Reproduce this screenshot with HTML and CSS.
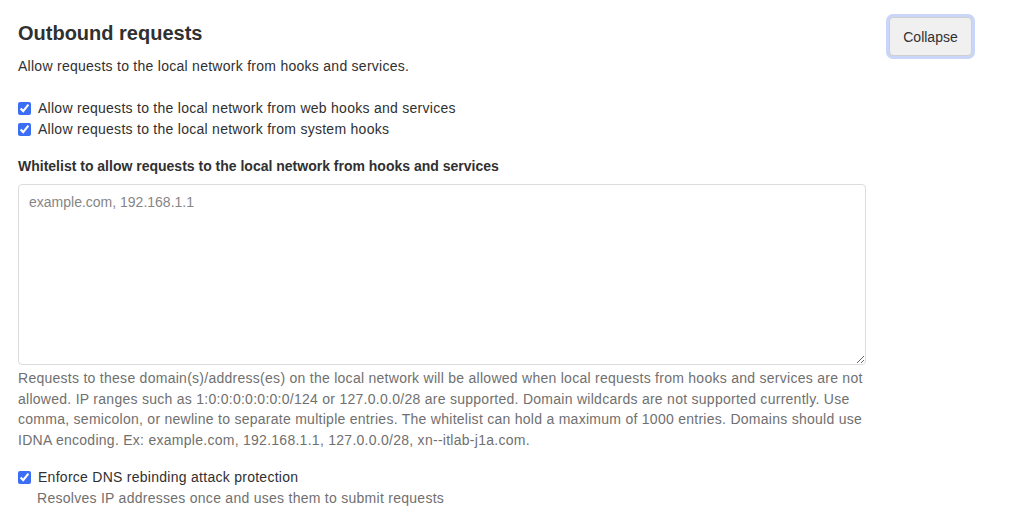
FILE: index.html
```html
<!DOCTYPE html>
<html lang="en">
<head>
  <meta charset="UTF-8">
  <title>Outbound requests</title>
  <link rel="stylesheet" href="styles.css">
</head>
<body>

  <section class="settings">
    <div class="settings-main">
      <h2 class="settings-title">Outbound requests</h2>
      <p class="settings-desc">Allow requests to the local network from hooks and services.</p>

      <div class="check-group">
        <label class="check"><input type="checkbox" checked> Allow requests to the local network from web hooks and services</label>
        <label class="check"><input type="checkbox" checked> Allow requests to the local network from system hooks</label>
      </div>

      <label class="field-label" for="whitelist">Whitelist to allow requests to the local network from hooks and services</label>
      <textarea id="whitelist" class="field-input" placeholder="example.com, 192.168.1.1"></textarea>
      <p class="field-help">Requests to these domain(s)/address(es) on the local network will be allowed when local requests from hooks and services are not allowed. IP ranges such as 1:0:0:0:0:0:0:0/124 or 127.0.0.0/28 are supported. Domain wildcards are not supported currently. Use comma, semicolon, or newline to separate multiple entries. The whitelist can hold a maximum of 1000 entries. Domains should use IDNA encoding. Ex: example.com, 192.168.1.1, 127.0.0.0/28, xn--itlab-j1a.com.</p>

      <label class="check check-dns"><input type="checkbox" checked> Enforce DNS rebinding attack protection</label>
      <p class="check-help">Resolves IP addresses once and uses them to submit requests</p>
    </div>

    <button class="collapse-btn">Collapse</button>
  </section>

</body>
</html>
```

FILE: styles.css
```css
body {
  margin: 0;
  font-family: 'Liberation Sans', Arial, sans-serif;
  font-size: 14px;
  color: #303030;
  background: #fff;
}

.settings {
  display: flex;
  align-items: flex-start;
  gap: 23px;
  padding: 17px 0 0 18px;
}

.settings-main {
  width: 848px;
}

.settings-title {
  margin: 4px 0 0;
  font-size: 20px;
  font-weight: 700;
  line-height: 24px;
  color: #303030;
}

.settings-desc,
.check,
.field-help,
.check-help {
  letter-spacing: 0.27px;
}

.settings-desc {
  margin: 11px 0 0;
  line-height: 20px;
}

.check-group {
  margin-top: 22px;
}

.check {
  display: flex;
  align-items: center;
  line-height: 21px;
}

.check input {
  width: 13px;
  height: 13px;
  margin: 0 7px 0 0;
  accent-color: #3b6ef5;
}

.field-label {
  display: block;
  margin-top: 16px;
  font-weight: 700;
  line-height: 20px;
}

.field-input {
  display: block;
  box-sizing: border-box;
  width: 848px;
  height: 181px;
  margin-top: 8px;
  padding: 9px 10px;
  border: 1px solid #dcdcdc;
  border-radius: 4px;
  font-family: inherit;
  font-size: 14px;
  color: #303030;
  resize: vertical;
}

.field-input::placeholder {
  color: #868686;
}

.field-help {
  margin: 3px 0 0;
  line-height: 20.5px;
  color: #707070;
}

.check-dns {
  margin-top: 17px;
}

.check-help {
  margin: 0 0 0 19px;
  line-height: 20px;
  color: #707070;
}

.collapse-btn {
  margin-top: 0;
  padding: 0 12px;
  height: 39px;
  width: 83px;
  font-family: inherit;
  font-size: 14px;
  color: #303030;
  background: #f0f0f0;
  border: 1px solid #cfcfcf;
  border-radius: 4px;
  box-shadow: 0 0 0 3px #c9d5f9;
  cursor: pointer;
}
```
